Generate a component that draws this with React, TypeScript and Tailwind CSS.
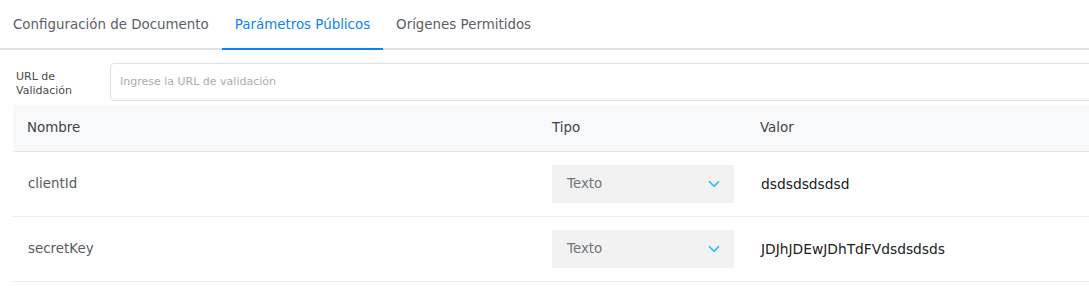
import { ChevronDown } from 'lucide-react'

interface Param {
  name: string
  type: string
  value: string
}

const tabs = ['Configuración de Documento', 'Parámetros Públicos', 'Orígenes Permitidos']

const params: Param[] = [
  { name: 'clientId', type: 'Texto', value: 'dsdsdsdsdsd' },
  { name: 'secretKey', type: 'Texto', value: 'JDJhJDEwJDhTdFVdsdsdsds' },
]

export default function App() {
  const active = 1

  return (
    <div className="w-full h-[302px] bg-white overflow-hidden font-['DejaVu_Sans',sans-serif]">
      <div className="w-[1120px]">
        {/* Tabs */}
        <div className="flex h-[50px] border-b-2 border-[#dee2e6]">
          {tabs.map((tab, i) => (
            <div
              key={tab}
              className={`px-[13px] pt-[3px] -mb-[2px] flex items-center text-[13.4px] border-b-2 ${
                i === active ? 'text-[#0a84f0] border-[#0a84f0]' : 'text-[#5b6068] border-transparent'
              }`}
            >
              {tab}
            </div>
          ))}
        </div>

        {/* URL de validación */}
        <div className="flex items-center mt-[13px] pl-4">
          <label className="w-[94px] pt-[3px] text-[11px] leading-[14px] text-[#4a4a4a]">
            URL de
            <br />
            Validación
          </label>
          <div className="flex-1 h-[38px] border border-[#dee2e6] rounded flex items-center px-[9px]">
            <span className="text-[11px] text-[#ababab]">Ingrese la URL de validación</span>
          </div>
        </div>

        {/* Parámetros */}
        <div className="ml-[13px] mt-[4px]">
          <div className="grid grid-cols-[525px_208px_1fr] h-[47px] items-center bg-[#f8f9fa] border-b border-[#e5e7eb] text-[13.4px] text-[#3f4247]">
            <div className="px-[14px]">Nombre</div>
            <div className="px-[14px]">Tipo</div>
            <div className="px-[14px]">Valor</div>
          </div>
          {params.map(p => (
            <div
              key={p.name}
              className="grid grid-cols-[525px_208px_1fr] h-[65px] items-center border-b border-[#e9ecef] text-[13.4px]"
            >
              <div className="px-[15px] pt-[1px] text-[#555a60]">{p.name}</div>
              <div className="px-[14px]">
                <div className="w-[182px] h-[38px] bg-[#f2f2f2] flex items-center justify-between pl-[15px] pr-[11px]">
                  <span className="text-[#6f737a]">{p.type}</span>
                  <ChevronDown className="w-[18px] h-[18px] text-[#1cbcff]" strokeWidth={2.2} />
                </div>
              </div>
              <div className="px-[15px] pt-[1px] text-[13.8px] text-[#222]">{p.value}</div>
            </div>
          ))}
        </div>
      </div>
    </div>
  )
}
